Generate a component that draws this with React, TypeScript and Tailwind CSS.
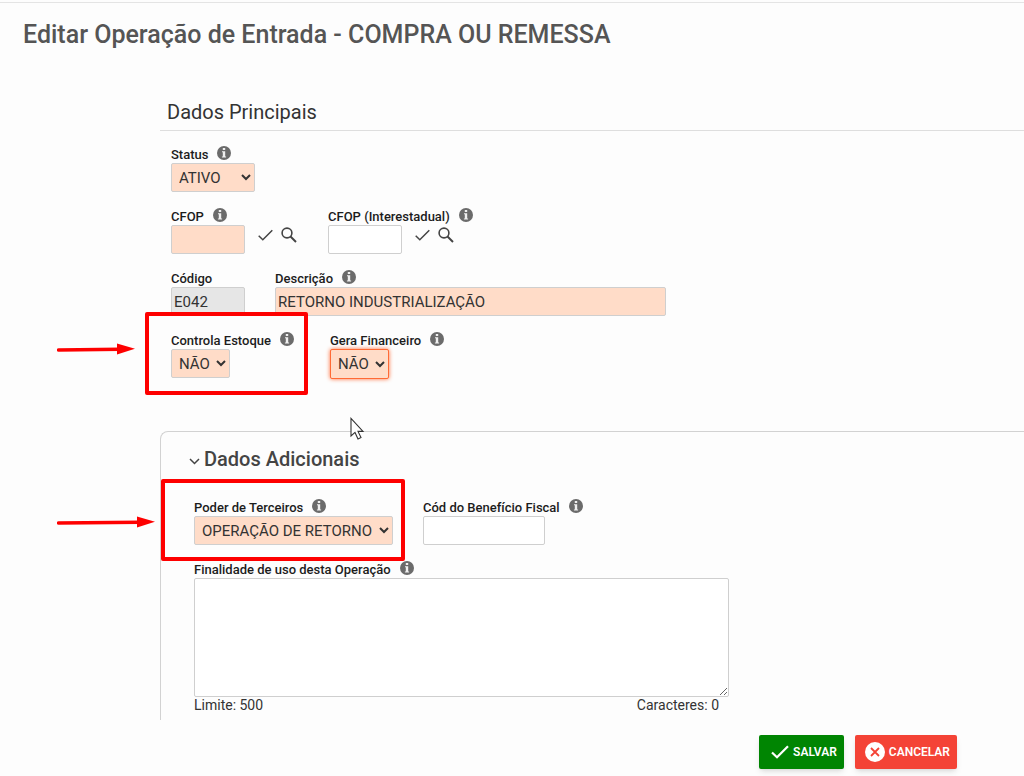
import React, { useState } from "react";

interface LabelProps {
    htmlFor: string;
    text: string;
    info?: boolean;
}

const controlClass = "h-[29px] rounded-xs border border-[#cfcfcf] text-[15px] text-[#333] focus:outline-none";
const requiredClass = "bg-[#ffdcc8]";

function InfoIcon() {
    return (
        <svg viewBox="0 0 14 14" className="w-[14px] h-[14px] mb-[3px]" aria-hidden="true">
            <circle cx="7" cy="7" r="7" fill="#6b6b6b" />
            <path d="M5.8 2h2.4v1.9H5.8zM5 5.2h3.2v5.2h.9v1.2H4.9v-1.2h.9V6.3H5z" fill="#fff" fillOpacity="0.9" />
        </svg>
    );
}

function Label({ htmlFor, text, info = true }: LabelProps) {
    return (
        <div className="flex items-end gap-[9px] h-[17px]">
            <label htmlFor={htmlFor} className="text-[13px] leading-[17px] font-medium text-[#1c1c1c] whitespace-nowrap">
                {text}
            </label>
            {info && <InfoIcon />}
        </div>
    );
}

function LookupButtons() {
    return (
        <div className="flex items-center gap-2 h-[19px]">
            <button type="button" aria-label="Validar" className="text-[#444]">
                <svg viewBox="0 0 15 12" className="w-[15px] h-3" fill="none" stroke="currentColor" strokeWidth="1.5">
                    <path d="M0.7 6.8 4.8 10.8 14.3 1.2" />
                </svg>
            </button>
            <button type="button" aria-label="Pesquisar" className="text-[#444]">
                <svg viewBox="0 0 16 16" className="w-4 h-4" fill="none" stroke="currentColor">
                    <circle cx="6" cy="6" r="4.9" strokeWidth="1.6" />
                    <path d="M9.5 9.5 15 15" strokeWidth="1.9" />
                </svg>
            </button>
        </div>
    );
}

function Arrow({ className, length }: { className: string; length: number }) {
    return (
        <svg
            viewBox={`0 0 ${length} 12`}
            width={length}
            height="12"
            className={"absolute max-w-none pointer-events-none " + className}
            aria-hidden="true"
        >
            <path d={`M1.5 7 L${length - 15} 6.2`} stroke="#fe0000" strokeWidth="3.4" strokeLinecap="round" />
            <path d={`M${length - 18} 0.5 L${length} 5.7 L${length - 18} 11.5z`} fill="#fe0000" />
        </svg>
    );
}

export default function App() {
    const [data, setData] = useState({
        status: "ATIVO",
        cfop: "",
        cfopInter: "",
        descricao: "RETORNO INDUSTRIALIZAÇÃO",
        estoque: "NÃO",
        financeiro: "NÃO",
        poder: "OPERAÇÃO DE RETORNO",
        beneficio: "",
        finalidade: "",
    });

    const handleChange = (e: React.ChangeEvent<HTMLInputElement | HTMLSelectElement | HTMLTextAreaElement>) => {
        setData({ ...data, [e.target.id]: e.target.value });
    };

    return (
        <div className="min-h-screen bg-[#fdfdfd] pt-[2px] font-[Roboto,sans-serif] overflow-x-hidden">
            <header className="border-t border-[#e4e4e4] px-[23px] pt-4">
                <h1 className="text-[25px] leading-8 font-medium text-[#555]">
                    Editar Operação de Entrada - COMPRA OU REMESSA
                </h1>
            </header>

            <form onSubmit={(e) => e.preventDefault()}>
                <div className="ml-40">
                    <section className="pt-12">
                        <h2 className="border-b border-[#dedede] pl-[7px] pb-1 text-xl leading-[27px] text-[#333]">
                            Dados Principais
                        </h2>
                        <div className="flex flex-col gap-4 pl-[11px] pt-[15px]">
                            <div>
                                <Label htmlFor="status" text="Status" />
                                <select id="status" value={data.status} onChange={handleChange} className={`${controlClass} ${requiredClass} px-[3px] w-[84px]`}>
                                    <option>ATIVO</option>
                                    <option>INATIVO</option>
                                </select>
                            </div>

                            <div className="flex gap-[31px]">
                                <div>
                                    <Label htmlFor="cfop" text="CFOP" />
                                    <div className="flex gap-[13px]">
                                        <input id="cfop" value={data.cfop} onChange={handleChange} className={`${controlClass} ${requiredClass} px-[3px] w-[74px]`} />
                                        <LookupButtons />
                                    </div>
                                </div>
                                <div>
                                    <Label htmlFor="cfopInter" text="CFOP (Interestadual)" />
                                    <div className="flex gap-[13px]">
                                        <input id="cfopInter" value={data.cfopInter} onChange={handleChange} className={`${controlClass} bg-white px-[3px] w-[74px]`} />
                                        <LookupButtons />
                                    </div>
                                </div>
                            </div>

                            <div className="flex gap-[30px]">
                                <div>
                                    <Label htmlFor="codigo" text="Código" info={false} />
                                    <input id="codigo" value="E042" readOnly className={`${controlClass} bg-[#e6e6e6] px-[2px] w-[74px]`} />
                                </div>
                                <div className="w-full max-w-[391px]">
                                    <Label htmlFor="descricao" text="Descrição" />
                                    <input id="descricao" value={data.descricao} onChange={handleChange} className={`${controlClass} ${requiredClass} px-[2px] w-full`} />
                                </div>
                            </div>

                            <div className="flex gap-9">
                                <div className="relative">
                                    <Label htmlFor="estoque" text="Controla Estoque" />
                                    <select id="estoque" value={data.estoque} onChange={handleChange} className={`${controlClass} ${requiredClass} px-[3px]`}>
                                        <option>NÃO</option>
                                        <option>SIM</option>
                                    </select>
                                    <div className="absolute -left-[26px] -right-[14px] -top-5 -bottom-4 border-4 border-[#fe0000] rounded-xs pointer-events-none" />
                                    <Arrow className="-left-[114px] top-[11px]" length={78} />
                                </div>
                                <div>
                                    <Label htmlFor="financeiro" text="Gera Financeiro" />
                                    <select
                                        id="financeiro"
                                        value={data.financeiro}
                                        onChange={handleChange}
                                        className="h-[30px] rounded-xs border border-[#ff6a35] bg-[#ffdcc8] px-[3px] text-[15px] text-[#333] shadow-[0_0_4px_#ff6a35] focus:outline-none"
                                    >
                                        <option>NÃO</option>
                                        <option>SIM</option>
                                    </select>
                                </div>
                            </div>
                        </div>
                    </section>

                    <section className="relative mt-[52px] rounded-tl-lg border-l border-t border-[#d2d2d2] pl-[33px] pt-[11px] pb-[6px]">
                        <svg viewBox="0 0 16 24" className="absolute left-[188px] -top-[15px] w-4 h-6" aria-hidden="true">
                            <path
                                d="M2 1.5V19l4-3.6 3 6.6 3-1.4-3-6.2h5z"
                                fill="#fff"
                                stroke="#333"
                                strokeWidth="1.1"
                            />
                        </svg>
                        <h2 className="text-xl leading-8 font-medium text-[#444]">
                            <button type="button" className="flex items-center -ml-[5px] gap-1">
                                <svg viewBox="0 0 11 7" className="w-[11px] h-[7px] mt-1" fill="none" stroke="currentColor" strokeWidth="1.5">
                                    <path d="M1 1 5.5 5.5 10 1" />
                                </svg>
                                Dados Adicionais
                            </button>
                        </h2>

                        <div className="flex flex-col gap-4 pt-6">
                            <div className="flex gap-[30px]">
                                <div className="relative">
                                    <Label htmlFor="poder" text="Poder de Terceiros" />
                                    <select id="poder" value={data.poder} onChange={handleChange} className={`${controlClass} ${requiredClass} px-[3px]`}>
                                        <option>OPERAÇÃO DE RETORNO</option>
                                    </select>
                                    <div className="absolute -left-[33px] -right-3 -top-5 -bottom-4 border-4 border-[#fe0000] rounded-xs pointer-events-none" />
                                    <Arrow className="-left-[137px] top-[17px]" length={98} />
                                </div>
                                <div>
                                    <Label htmlFor="beneficio" text="Cód do Benefício Fiscal" />
                                    <input id="beneficio" value={data.beneficio} onChange={handleChange} className={`${controlClass} bg-white px-[3px] w-[122px]`} />
                                </div>
                            </div>

                            <div className="w-full max-w-[535px]">
                                <Label htmlFor="finalidade" text="Finalidade de uso desta Operação" />
                                <textarea
                                    id="finalidade"
                                    maxLength={500}
                                    value={data.finalidade}
                                    onChange={handleChange}
                                    className="block w-full h-[119px] resize rounded-xs border border-[#cfcfcf] bg-white p-1 text-[15px] text-[#333] focus:outline-none"
                                />
                                <div className="flex justify-between pr-[10px] text-sm leading-[17px] text-[#333]">
                                    <span>Limite: 500</span>
                                    <span>Caracteres: {data.finalidade.length}</span>
                                </div>
                            </div>
                        </div>
                    </section>
                </div>

                <div className="flex justify-end gap-[11px] pr-[67px] pt-[15px]">
                    <button type="submit" className="flex items-center gap-1 h-[34px] pl-3 pr-[7px] rounded-xs bg-[#008502] text-white text-xs font-semibold shadow-md">
                        <svg viewBox="0 0 18 14" className="w-[18px] h-[14px]" fill="none" stroke="currentColor" strokeWidth="2.2">
                            <path d="M1 7.5 6 12.3 17 1.2" />
                        </svg>
                        SALVAR
                    </button>
                    <button type="button" className="flex items-center gap-1 h-[34px] pl-[10px] pr-[7px] rounded-xs bg-[#f44336] text-white text-xs font-semibold shadow-md">
                        <svg viewBox="0 0 20 20" className="w-5 h-5">
                            <circle cx="10" cy="10" r="10" fill="#fff" />
                            <path d="M6 6 14 14M14 6 6 14" stroke="#f44336" strokeWidth="1.8" />
                        </svg>
                        CANCELAR
                    </button>
                </div>
            </form>
        </div>
    );
}
